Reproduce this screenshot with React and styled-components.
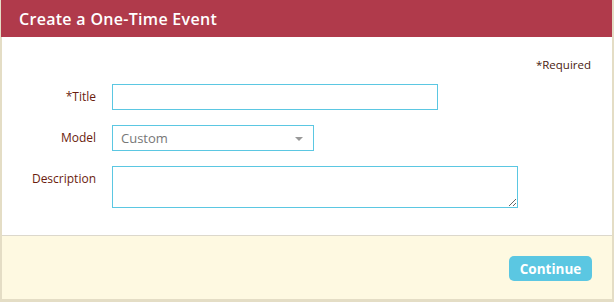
import React from "react";
import styled, { createGlobalStyle } from "styled-components";

const GlobalStyle = createGlobalStyle`
  html, body {
    margin: 0;
    padding: 0;
    background: #e4ddc5;
  }
  body {
    font-family: "Open Sans", "Liberation Sans", sans-serif;
  }
`;

const Frame = styled.div`
  width: 614px;
  height: 302px;
  box-sizing: border-box;
  padding: 0 2px 3px 2px;
  background: #e4ddc5;
`;

const Card = styled.div`
  display: flex;
  flex-direction: column;
  height: 100%;
  background: #fff;
`;

const Header = styled.div`
  height: 37px;
  margin-left: -1px;
  background: #b03a4b;
  color: #fff;
  display: flex;
  align-items: center;
  padding-left: 18px;
  font-size: 16px;
  font-weight: 600;
  letter-spacing: 0.3px;
`;

const Body = styled.div`
  padding: 20px 21px 27px 0;
  border-bottom: 1px solid #dcd8cc;
`;

const Required = styled.div`
  text-align: right;
  font-size: 11.5px;
  line-height: 16px;
  color: #4a1a10;
`;

const Form = styled.div`
  display: grid;
  grid-template-columns: 94px 1fr;
  column-gap: 16px;
  row-gap: 15px;
  margin-top: 11px;
  align-items: start;
`;

const Label = styled.label`
  text-align: right;
  font-size: 12px;
  line-height: 26px;
  color: #6a1c0e;
`;

const fieldBorder = "#5bc7e2";

const TextInput = styled.input`
  box-sizing: border-box;
  width: ${(p) => p.$w}px;
  height: 26px;
  border: 1px solid ${fieldBorder};
  margin: 0;
  padding: 0 8px;
  font: inherit;
  outline: none;
`;

const Select = styled.div`
  box-sizing: border-box;
  width: 202px;
  height: 26px;
  border: 1px solid ${fieldBorder};
  display: flex;
  align-items: center;
  justify-content: space-between;
  padding: 0 10px 0 8px;
  font-size: 13px;
  color: #777;
`;

const Caret = styled.span`
  width: 0;
  height: 0;
  border-left: 4px solid transparent;
  border-right: 4px solid transparent;
  border-top: 4px solid #999;
  margin-top: 1px;
`;

const TextArea = styled.textarea`
  box-sizing: border-box;
  width: 406px;
  height: 42px;
  border: 1px solid ${fieldBorder};
  margin: 0;
  padding: 4px 8px;
  font: inherit;
  outline: none;
  display: block;
`;

const Footer = styled.div`
  flex: 1;
  background: #fef9e1;
  display: flex;
  justify-content: flex-end;
  align-items: flex-start;
  padding: 20px 20px 0 0;
`;

const Button = styled.button`
  width: 83px;
  height: 25px;
  border: none;
  border-radius: 5px;
  background: #5bc7e2;
  color: #fff;
  font-family: inherit;
  font-size: 13.5px;
  font-weight: 700;
  padding: 0;
  cursor: pointer;
`;

export default function App() {
  return (
    <>
      <GlobalStyle />
      <Frame>
        <Card>
          <Header>Create a One-Time Event</Header>
          <Body>
            <Required>*Required</Required>
            <Form>
              <Label>*Title</Label>
              <TextInput $w={326} type="text" />
              <Label>Model</Label>
              <Select>
                <span>Custom</span>
                <Caret />
              </Select>
              <Label>Description</Label>
              <TextArea />
            </Form>
          </Body>
          <Footer>
            <Button>Continue</Button>
          </Footer>
        </Card>
      </Frame>
    </>
  );
}
